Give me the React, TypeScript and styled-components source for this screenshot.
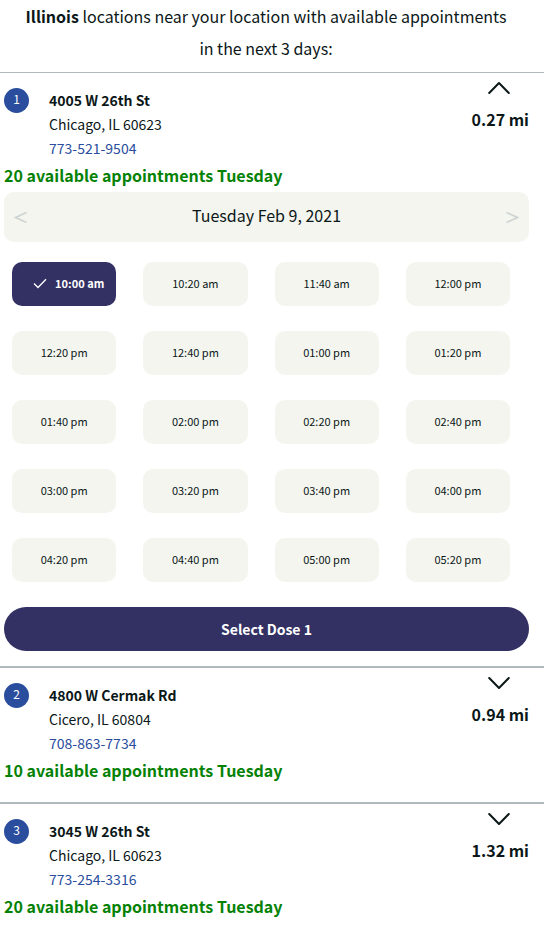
import React, { useState } from "react";
import styled, { createGlobalStyle } from "styled-components";

const colors = {
  text: "#0b1718",
  navy: "#333163",
  blue: "#2a4d9d",
  panel: "#f4f5ee",
  rule: "#b1b9bc",
  faint: "#ccd3d3",
  green: "#058205",
};

const GlobalStyle = createGlobalStyle`
  * { box-sizing: border-box; }
  body {
    margin: 0;
    background: #fff;
    color: ${colors.text};
    font-family: "Noto Sans CJK SC", "Noto Sans", sans-serif;
    font-size: 14px;
    line-height: 24px;
  }
  button { font-family: inherit; color: inherit; border: 0; padding: 0; cursor: pointer; }
`;

const Page = styled.main`
  margin-right: 11px;
`;

const Heading = styled.h1`
  margin: 0;
  padding: 0 32px 8px 20px;
  font-size: 16px;
  font-weight: 400;
  line-height: 32px;
  text-align: center;
`;

const Location = styled.section<{ $thin: boolean }>`
  border-top: ${(p) => (p.$thin ? 1 : 2)}px solid ${colors.rule};
  padding: 15px 15px 15px 4px;
`;

const Summary = styled.div`
  display: flex;
  align-items: flex-start;
`;

const Badge = styled.span`
  width: 25px;
  height: 25px;
  flex: none;
  border-radius: 50%;
  background: ${colors.blue};
  color: #fff;
  font-size: 12px;
  line-height: 22px;
  text-align: center;
`;

const Address = styled.address`
  flex: 1;
  margin-left: 20px;
  font-style: normal;
  display: flex;
  flex-direction: column;
  align-items: flex-start;
`;

const Street = styled.strong`
  font-weight: 700;
`;

const Phone = styled.a`
  color: ${colors.blue};
  text-decoration: none;
`;

const Distance = styled.div`
  display: flex;
  flex-direction: column;
  align-items: center;
  margin-top: -7px;
  font-size: 16px;
  font-weight: 700;
  line-height: 24px;
`;

const Toggle = styled.button`
  display: flex;
  background: none;
  margin-bottom: 12px;
`;

const Availability = styled.p`
  margin: 0;
  padding-bottom: 2px;
  color: ${colors.green};
  font-size: 16px;
  font-weight: 700;
  line-height: 30px;
`;

const DateBar = styled.div`
  display: flex;
  align-items: center;
  justify-content: space-between;
  height: 50px;
  padding: 0 10px;
  border-radius: 10px;
  background: ${colors.panel};
  font-size: 16px;
`;

const DateLabel = styled.span`
  padding-bottom: 4px;
`;

const Step = styled.button`
  background: none;
  &:disabled { color: ${colors.faint}; cursor: default; }
  svg { display: block; }
`;

const Slots = styled.div`
  display: grid;
  grid-template-columns: repeat(4, 1fr);
  gap: 25px 27px;
  padding: 20px 19px 25px 8px;
`;

const Slot = styled.button<{ $selected: boolean }>`
  && {
    display: flex;
    align-items: center;
    justify-content: ${(p) => (p.$selected ? "flex-end" : "center")};
    gap: 8px;
    height: 44px;
    padding: 0 ${(p) => (p.$selected ? 12 : 0)}px 2px;
    border-radius: 10px;
    background: ${(p) => (p.$selected ? colors.navy : colors.panel)};
    color: ${(p) => (p.$selected ? "#fff" : colors.text)};
    font-size: 11px;
    font-weight: ${(p) => (p.$selected ? 700 : 400)};
  }
`;

const Submit = styled.button`
  && {
    display: block;
    width: 100%;
    height: 44px;
    border-radius: 22px;
    background: ${colors.navy};
    color: #fff;
    font-size: 14px;
    font-weight: 700;
  }
`;

const Chevron = ({ up }: { up: boolean }) => (
  <svg width="24" height="14" viewBox="0 0 24 14" fill="none" stroke="currentColor" strokeWidth="2" strokeLinecap="round" strokeLinejoin="round" aria-hidden>
    <path d={up ? "M1.200 12 11 2 20.800 12" : "M1.200 2 11 12 20.800 2"} />
  </svg>
);

const Arrow = ({ left }: { left: boolean }) => (
  <svg width="13" height="12" viewBox="0 0 13 12" fill="none" stroke="currentColor" strokeWidth="1.500" aria-hidden>
    <path d={left ? "M12.500 1.500 1.500 6.500 12.500 11.500" : "M.500 1.500 11.500 6.500 .500 11.500"} />
  </svg>
);

const Check = () => (
  <svg width="14" height="11" viewBox="0 0 14 11" fill="none" stroke="currentColor" strokeWidth="1.300" aria-hidden>
    <path d="M1 5.500 5 9.500 13 1.300" />
  </svg>
);

const times = [
  "10:00 am", "10:20 am", "11:40 am", "12:00 pm",
  "12:20 pm", "12:40 pm", "01:00 pm", "01:20 pm",
  "01:40 pm", "02:00 pm", "02:20 pm", "02:40 pm",
  "03:00 pm", "03:20 pm", "03:40 pm", "04:00 pm",
  "04:20 pm", "04:40 pm", "05:00 pm", "05:20 pm",
];

const locations = [
  { street: "4005 W 26th St", city: "Chicago, IL 60623", phone: "773-521-9504", miles: "0.27 mi", count: 20 },
  { street: "4800 W Cermak Rd", city: "Cicero, IL 60804", phone: "708-863-7734", miles: "0.94 mi", count: 10 },
  { street: "3045 W 26th St", city: "Chicago, IL 60623", phone: "773-254-3316", miles: "1.32 mi", count: 20 },
];

function Scheduler() {
  const [selected, setSelected] = useState(times[0]);
  return (
    <>
      <DateBar>
        <Step disabled aria-label="Previous day"><Arrow left /></Step>
        <DateLabel>Tuesday Feb 9, 2021</DateLabel>
        <Step disabled aria-label="Next day"><Arrow left={false} /></Step>
      </DateBar>
      <Slots>
        {times.map((time) => (
          <Slot key={time} $selected={time === selected} aria-pressed={time === selected} onClick={() => setSelected(time)}>
            {time === selected && <Check />}
            <span>{time}</span>
          </Slot>
        ))}
      </Slots>
      <Submit>Select Dose 1</Submit>
    </>
  );
}

export default function App() {
  const [open, setOpen] = useState<number | null>(0);
  return (
    <Page>
      <GlobalStyle />
      <Heading>
        <b>Illinois</b> locations near your location with available appointments in the next 3 days:
      </Heading>
      {locations.map((place, i) => (
        <Location key={place.street} $thin={i === 0}>
          <Summary>
            <Badge>{i + 1}</Badge>
            <Address>
              <Street>{place.street}</Street>
              <span>{place.city}</span>
              <Phone href={`tel:${place.phone}`}>{place.phone}</Phone>
            </Address>
            <Distance>
              <Toggle
                aria-expanded={open === i}
                aria-label={`Appointments at ${place.street}`}
                onClick={() => setOpen(open === i ? null : i)}
              >
                <Chevron up={open === i} />
              </Toggle>
              <span>{place.miles}</span>
            </Distance>
          </Summary>
          <Availability>{place.count} available appointments Tuesday</Availability>
          {open === i && <Scheduler />}
        </Location>
      ))}
    </Page>
  );
}
